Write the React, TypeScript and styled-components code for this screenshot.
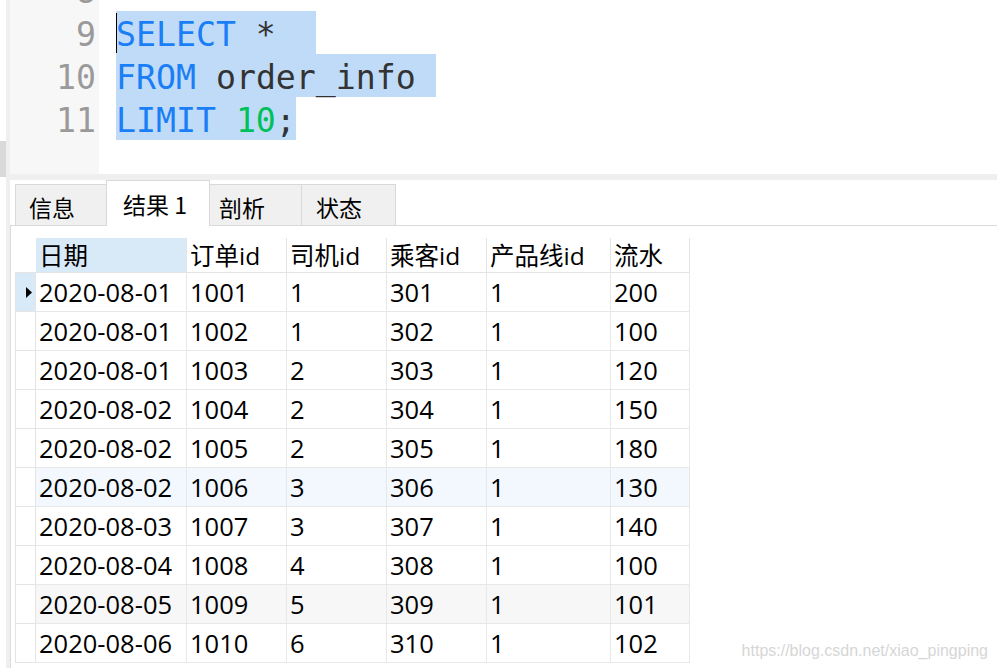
import React from 'react';
import styled, { createGlobalStyle } from 'styled-components';

type Tone = 'plain' | 'hover' | 'muted';

type RowData = {
    date: string
    order: string
    driver: string
    passenger: string
    line: string
    amount: string
    tone?: Tone
    current?: boolean
}

const columns = [
    { title: '日期', width: 151 },
    { title: '订单id', width: 100 },
    { title: '司机id', width: 100 },
    { title: '乘客id', width: 100 },
    { title: '产品线id', width: 124 },
    { title: '流水', width: 79 },
];

const rows: RowData[] = [
    { date: '2020-08-01', order: '1001', driver: '1', passenger: '301', line: '1', amount: '200', current: true },
    { date: '2020-08-01', order: '1002', driver: '1', passenger: '302', line: '1', amount: '100' },
    { date: '2020-08-01', order: '1003', driver: '2', passenger: '303', line: '1', amount: '120' },
    { date: '2020-08-02', order: '1004', driver: '2', passenger: '304', line: '1', amount: '150' },
    { date: '2020-08-02', order: '1005', driver: '2', passenger: '305', line: '1', amount: '180' },
    { date: '2020-08-02', order: '1006', driver: '3', passenger: '306', line: '1', amount: '130', tone: 'hover' },
    { date: '2020-08-03', order: '1007', driver: '3', passenger: '307', line: '1', amount: '140' },
    { date: '2020-08-04', order: '1008', driver: '4', passenger: '308', line: '1', amount: '100' },
    { date: '2020-08-05', order: '1009', driver: '5', passenger: '309', line: '1', amount: '101', tone: 'muted' },
    { date: '2020-08-06', order: '1010', driver: '6', passenger: '310', line: '1', amount: '102' },
];

const tabs = [
    { label: '信息', width: 92, pad: 13 },
    { label: '结果 1', width: 104, pad: 16, active: true },
    { label: '剖析', width: 93, pad: 9 },
    { label: '状态', width: 95, pad: 14 },
];

const toneColor = (tone?: Tone) =>
    tone === 'hover' ? '#f2f8fd' : tone === 'muted' ? '#f7f7f7' : '#ffffff';

export default function App() {
    return (
        <>
            <GlobalStyle/>
            <Page>
                <EdgeStrip>
                    <EdgeTrack>
                        <Grip/>
                    </EdgeTrack>
                    <EdgeRail/>
                </EdgeStrip>
                <Main>
                    <Editor>
                        <Gutter>
                            <Lines>
                                <LineNo>8</LineNo>
                                <LineNo>9</LineNo>
                                <LineNo>10</LineNo>
                                <LineNo>11</LineNo>
                            </Lines>
                        </Gutter>
                        <Code>
                            <Lines>
                                <CodeLine/>
                                <CodeLine>
                                    <Caret/>
                                    <Selection $tail>
                                        <Keyword>SELECT</Keyword> *{' '}
                                    </Selection>
                                </CodeLine>
                                <CodeLine>
                                    <Selection $tail>
                                        <Keyword>FROM</Keyword> order_info
                                    </Selection>
                                </CodeLine>
                                <CodeLine>
                                    <Selection>
                                        <Keyword>LIMIT</Keyword> <Num>10</Num>;
                                    </Selection>
                                </CodeLine>
                            </Lines>
                        </Code>
                    </Editor>
                    <Splitter/>
                    <TabBar>
                        {tabs.map(t => (
                            <Tab key={t.label} $width={t.width} $pad={t.pad} $active={!!t.active}>
                                {t.label}
                            </Tab>
                        ))}
                    </TabBar>
                    <ResultPanel>
                        <Grid>
                            <HeadRow>
                                <Corner/>
                                {columns.map((c, i) => (
                                    <HeadCell key={c.title} $width={c.width} $selected={i === 0}>
                                        {c.title}
                                    </HeadCell>
                                ))}
                            </HeadRow>
                            {rows.map(r => (
                                <Row key={r.order} $tone={r.tone}>
                                    <RowHead $current={!!r.current}>
                                        {r.current && (
                                            <svg width="6" height="11" viewBox="0 0 6 11">
                                                <polygon points="0,0 6,5.5 0,11" fill="#000"/>
                                            </svg>
                                        )}
                                    </RowHead>
                                    <Cell $width={columns[0].width}>{r.date}</Cell>
                                    <Cell $width={columns[1].width}>{r.order}</Cell>
                                    <Cell $width={columns[2].width}>{r.driver}</Cell>
                                    <Cell $width={columns[3].width}>{r.passenger}</Cell>
                                    <Cell $width={columns[4].width}>{r.line}</Cell>
                                    <Cell $width={columns[5].width}>{r.amount}</Cell>
                                </Row>
                            ))}
                        </Grid>
                    </ResultPanel>
                </Main>
                <Watermark>https://blog.csdn.net/xiao_pingping</Watermark>
            </Page>
        </>
    );
}

const GlobalStyle = createGlobalStyle`
    html, body {
        margin: 0;
        padding: 0;
        background: #ffffff;
    }
    body {
        width: 997px;
        height: 668px;
        overflow: hidden;
        font-family: "Open Sans", "Noto Sans CJK SC", sans-serif;
    }
`

const Page = styled.div`
    position: relative;
    display: flex;
    width: 997px;
    height: 668px;
    overflow: hidden;
`

const EdgeStrip = styled.div`
    display: flex;
    width: 10px;
    flex-shrink: 0;
`

const EdgeTrack = styled.div`
    width: 6px;
    padding-top: 141px;
`

const Grip = styled.div`
    height: 36px;
    background: #d9d9d9;
`

const EdgeRail = styled.div`
    width: 4px;
    background: #efefef;
`

const Main = styled.div`
    flex: 1;
    min-width: 0;
    display: flex;
    flex-direction: column;
`

const Editor = styled.div`
    display: flex;
    height: 174px;
    overflow: hidden;
    font-family: "DejaVu Sans Mono", monospace;
    font-size: 33.2px;
`

const Gutter = styled.div`
    width: 86px;
    padding-right: 3px;
    background: #f7f7f7;
    color: #9a9a9a;
    text-align: right;
`

const Lines = styled.div`
    margin-top: -32px;
`

const LineNo = styled.div`
    height: 43px;
    line-height: 47px;
`

const Code = styled.div`
    flex: 1;
    padding-left: 17px;
    background: #ffffff;
    color: #333333;
`

const CodeLine = styled.div`
    display: flex;
    align-items: center;
    height: 43px;
    white-space: pre;
`

const Selection = styled.span<{ $tail?: boolean }>`
    display: inline-block;
    height: 43px;
    line-height: 47px;
    padding-right: ${p => (p.$tail ? '20px' : '0')};
    background: #bfdbf7;
`

const Caret = styled.span`
    position: relative;
    z-index: 1;
    flex-shrink: 0;
    width: 1px;
    height: 40px;
    margin-right: -1px;
    background: #000000;
`

const Keyword = styled.span`
    color: #1a7ef6;
`

const Num = styled.span`
    color: #00c05a;
`

const Splitter = styled.div`
    height: 6px;
    background: #efefef;
`

const TabBar = styled.div`
    display: flex;
    align-items: flex-end;
    height: 45px;
    padding-left: 5px;
    border-bottom: 1px solid #d9d9d9;
`

const Tab = styled.div<{ $width: number; $pad: number; $active: boolean }>`
    position: relative;
    z-index: 1;
    box-sizing: border-box;
    width: ${p => p.$width}px;
    height: ${p => (p.$active ? 46 : 41)}px;
    margin-bottom: ${p => (p.$active ? -1 : 0)}px;
    margin-left: -1px;
    padding-left: ${p => p.$pad}px;
    padding-top: ${p => (p.$active ? 8 : 7)}px;
    border: 1px solid #d9d9d9;
    border-bottom: 0;
    background: ${p => (p.$active ? '#ffffff' : '#f0f0f0')};
    color: #000000;
    font-family: "Noto Sans CJK SC", sans-serif;
    font-size: 23px;
    line-height: 30px;

    &:first-child {
        margin-left: 0;
    }
`

const ResultPanel = styled.div`
    flex: 1;
    padding: 12px 0 0 4px;
    border-left: 1px solid #dcdcdc;
`

const Grid = styled.div`
    display: flex;
    flex-direction: column;
    align-items: flex-start;
    font-size: 24.5px;
    color: #000000;
`

const HeadRow = styled.div`
    display: flex;
    height: 35px;
`

const Corner = styled.div`
    box-sizing: border-box;
    width: 21px;
    border-bottom: 1px solid #e4e4e4;
`

const HeadCell = styled.div<{ $width: number; $selected: boolean }>`
    box-sizing: border-box;
    width: ${p => p.$width}px;
    padding-left: 3px;
    border-right: 1px solid #e4e4e4;
    border-bottom: 1px solid #e4e4e4;
    background: ${p => (p.$selected ? '#d8e9f7' : '#ffffff')};
    line-height: 36px;
    white-space: nowrap;
`

const Row = styled.div<{ $tone?: Tone }>`
    display: flex;
    height: 39px;
    background: ${p => toneColor(p.$tone)};
`

const RowHead = styled.div<{ $current: boolean }>`
    box-sizing: border-box;
    width: 21px;
    display: flex;
    align-items: center;
    justify-content: flex-end;
    padding-right: 3px;
    border-left: 1px solid #e4e4e4;
    border-right: 1px solid #e4e4e4;
    border-bottom: 1px solid #e4e4e4;
    background: ${p => (p.$current ? '#d8e9f7' : '#ffffff')};
`

const Cell = styled.div<{ $width: number }>`
    box-sizing: border-box;
    width: ${p => p.$width}px;
    padding-left: 3px;
    border-right: 1px solid #e8e8e8;
    border-bottom: 1px solid #e8e8e8;
    font-size: 25.5px;
    line-height: 38px;
    white-space: nowrap;
`

const Watermark = styled.div`
    position: absolute;
    right: 9px;
    bottom: 8px;
    color: #d6d6d6;
    font-family: "Liberation Sans", Arial, sans-serif;
    font-size: 16px;
    pointer-events: none;
`
